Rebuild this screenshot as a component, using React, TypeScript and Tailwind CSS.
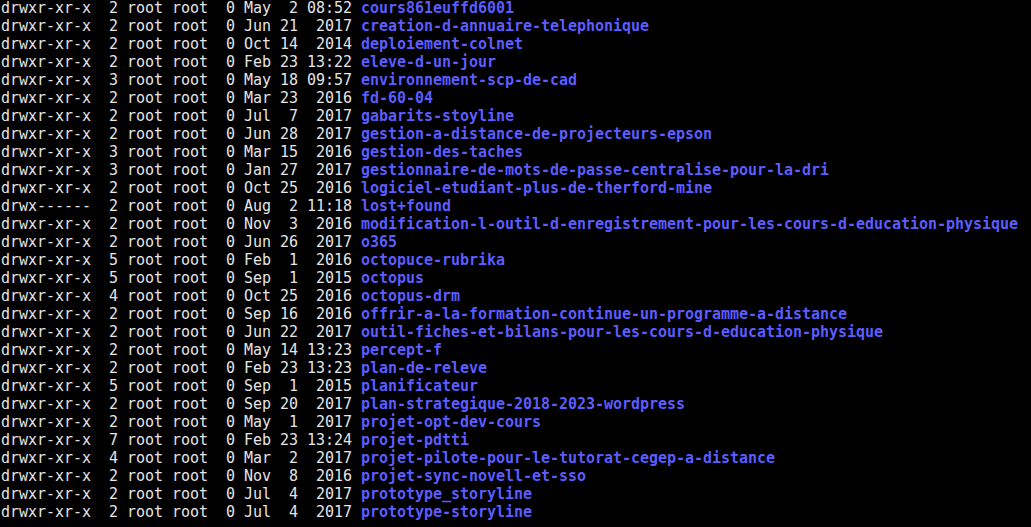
const rows: [string, string][] = [
  ["drwxr-xr-x  2 root root  0 May  2 08:52 ", "cours861euffd6001"],
  ["drwxr-xr-x  2 root root  0 Jun 21  2017 ", "creation-d-annuaire-telephonique"],
  ["drwxr-xr-x  2 root root  0 Oct 14  2014 ", "deploiement-colnet"],
  ["drwxr-xr-x  2 root root  0 Feb 23 13:22 ", "eleve-d-un-jour"],
  ["drwxr-xr-x  3 root root  0 May 18 09:57 ", "environnement-scp-de-cad"],
  ["drwxr-xr-x  2 root root  0 Mar 23  2016 ", "fd-60-04"],
  ["drwxr-xr-x  2 root root  0 Jul  7  2017 ", "gabarits-stoyline"],
  ["drwxr-xr-x  2 root root  0 Jun 28  2017 ", "gestion-a-distance-de-projecteurs-epson"],
  ["drwxr-xr-x  3 root root  0 Mar 15  2016 ", "gestion-des-taches"],
  ["drwxr-xr-x  3 root root  0 Jan 27  2017 ", "gestionnaire-de-mots-de-passe-centralise-pour-la-dri"],
  ["drwxr-xr-x  2 root root  0 Oct 25  2016 ", "logiciel-etudiant-plus-de-therford-mine"],
  ["drwx------  2 root root  0 Aug  2 11:18 ", "lost+found"],
  ["drwxr-xr-x  2 root root  0 Nov  3  2016 ", "modification-l-outil-d-enregistrement-pour-les-cours-d-education-physique"],
  ["drwxr-xr-x  2 root root  0 Jun 26  2017 ", "o365"],
  ["drwxr-xr-x  5 root root  0 Feb  1  2016 ", "octopuce-rubrika"],
  ["drwxr-xr-x  5 root root  0 Sep  1  2015 ", "octopus"],
  ["drwxr-xr-x  4 root root  0 Oct 25  2016 ", "octopus-drm"],
  ["drwxr-xr-x  2 root root  0 Sep 16  2016 ", "offrir-a-la-formation-continue-un-programme-a-distance"],
  ["drwxr-xr-x  2 root root  0 Jun 22  2017 ", "outil-fiches-et-bilans-pour-les-cours-d-education-physique"],
  ["drwxr-xr-x  2 root root  0 May 14 13:23 ", "percept-f"],
  ["drwxr-xr-x  2 root root  0 Feb 23 13:23 ", "plan-de-releve"],
  ["drwxr-xr-x  5 root root  0 Sep  1  2015 ", "planificateur"],
  ["drwxr-xr-x  2 root root  0 Sep 20  2017 ", "plan-strategique-2018-2023-wordpress"],
  ["drwxr-xr-x  2 root root  0 May  1  2017 ", "projet-opt-dev-cours"],
  ["drwxr-xr-x  7 root root  0 Feb 23 13:24 ", "projet-pdtti"],
  ["drwxr-xr-x  4 root root  0 Mar  2  2017 ", "projet-pilote-pour-le-tutorat-cegep-a-distance"],
  ["drwxr-xr-x  2 root root  0 Nov  8  2016 ", "projet-sync-novell-et-sso"],
  ["drwxr-xr-x  2 root root  0 Jul  4  2017 ", "prototype_storyline"],
  ["drwxr-xr-x  2 root root  0 Jul  4  2017 ", "prototype-storyline"],
];

export default function App() {
  return (
    <div className="w-[1031px] h-[527px] overflow-hidden bg-black text-[#e5e5e5] font-['DejaVu_Sans_Mono',monospace] text-[15px] leading-[18px] tracking-[-0.03px] pl-px">
      <div className="-mt-px">
        {rows.map(([meta, name], i) => (
          <div key={i} className="whitespace-pre">
            {meta}
            <span className="text-[#5c5cff] font-bold">{name}</span>
          </div>
        ))}
      </div>
    </div>
  );
}
